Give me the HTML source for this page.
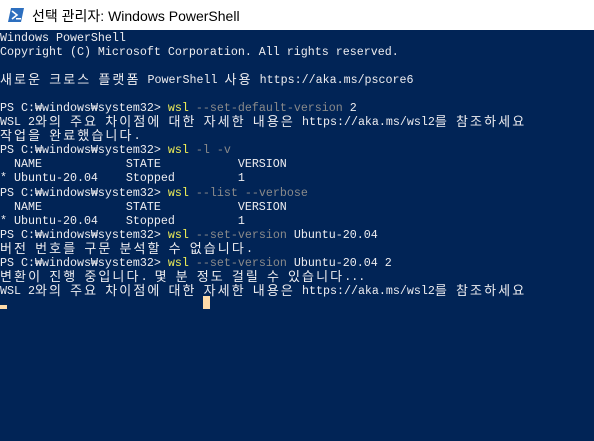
<!DOCTYPE html>
<html><head><meta charset="utf-8"><style>
body{margin:0;width:594px;height:441px;overflow:hidden;background:#012456;position:relative}
.t{position:absolute;left:0;top:0;width:594px;height:30px;background:#fff;font:14px "Liberation Sans","Noto Sans CJK KR",sans-serif;color:#000}
.t span{position:absolute;left:32px;top:6px}
pre{position:absolute;left:0;top:31px;margin:0;font:11.67px/14.05px "Liberation Mono","Noto Sans CJK KR",monospace;color:#eeedf0;white-space:pre}
pre div{height:14.05px;overflow:visible}
.k{font:13px/14px "Noto Sans CJK KR",sans-serif;letter-spacing:2.1px;display:inline-block;height:14px;vertical-align:top;margin-top:-1px}
.y{color:#f0ee56}.g{color:#8a8a8a}
.c1{position:absolute;left:0;top:305px;width:7px;height:4px;background:#fedba9}
.c2{position:absolute;left:203px;top:296px;width:7px;height:13px;background:#fedba9}
</style></head><body>
<div class="t"><svg style="position:absolute;left:8px;top:8px" width="16" height="14"><polygon points="3,0 16,0 13,14 0,14" fill="#2d6fbf"/><path d="M4 3 L9 7 L4 11" stroke="#fff" stroke-width="1.6" fill="none"/><rect x="8" y="10" width="5" height="1.5" fill="#fff"/></svg><span>선택 관리자: Windows PowerShell</span></div>
<pre><div>Windows PowerShell</div><div>Copyright (C) Microsoft Corporation. All rights reserved.</div><div></div><div><span class="k">새로운</span> <span class="k">크로스</span> <span class="k">플랫폼</span> PowerShell <span class="k">사용</span> https://aka.ms/pscore6</div><div></div><div>PS C:₩windows₩system32&gt; <span class="y">wsl</span> <span class="g">--set-default-version</span> 2</div><div>WSL 2<span class="k">와의</span> <span class="k">주요</span> <span class="k">차이점에</span> <span class="k">대한</span> <span class="k">자세한</span> <span class="k">내용은</span> https://aka.ms/wsl2<span class="k">를</span> <span class="k">참조하세요</span></div><div><span class="k">작업을</span> <span class="k">완료했습니다</span>.</div><div>PS C:₩windows₩system32&gt; <span class="y">wsl</span> <span class="g">-l -v</span></div><div>  NAME            STATE           VERSION</div><div>* Ubuntu-20.04    Stopped         1</div><div>PS C:₩windows₩system32&gt; <span class="y">wsl</span> <span class="g">--list --verbose</span></div><div>  NAME            STATE           VERSION</div><div>* Ubuntu-20.04    Stopped         1</div><div>PS C:₩windows₩system32&gt; <span class="y">wsl</span> <span class="g">--set-version</span> Ubuntu-20.04</div><div><span class="k">버전</span> <span class="k">번호를</span> <span class="k">구문</span> <span class="k">분석할</span> <span class="k">수</span> <span class="k">없습니다</span>.</div><div>PS C:₩windows₩system32&gt; <span class="y">wsl</span> <span class="g">--set-version</span> Ubuntu-20.04 2</div><div><span class="k">변환이</span> <span class="k">진행</span> <span class="k">중입니다</span>. <span class="k">몇</span> <span class="k">분</span> <span class="k">정도</span> <span class="k">걸릴</span> <span class="k">수</span> <span class="k">있습니다</span>...</div><div>WSL 2<span class="k">와의</span> <span class="k">주요</span> <span class="k">차이점에</span> <span class="k">대한</span> <span class="k">자세한</span> <span class="k">내용은</span> https://aka.ms/wsl2<span class="k">를</span> <span class="k">참조하세요</span></div></pre>
<div class="c1"></div><div class="c2"></div>
</body></html>
